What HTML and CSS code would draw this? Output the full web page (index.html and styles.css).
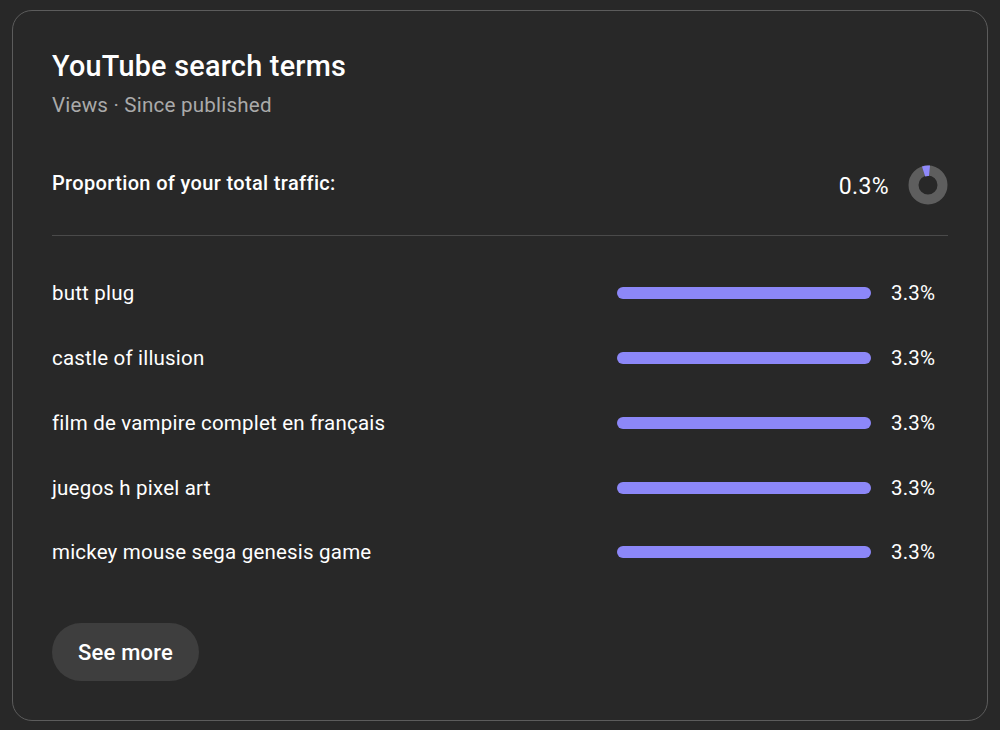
FILE: index.html
```html
<!DOCTYPE html>
<html>
<head>
<meta charset="utf-8">
<link rel="stylesheet" href="styles.css">
</head>
<body>
<div class="card">
  <h1 class="title">YouTube search terms</h1>
  <div class="subtitle">Views · Since published</div>
  <div class="proportion">
    <div class="prop-label">Proportion of your total traffic:</div>
    <div class="prop-value">0.3%</div>
    <svg class="donut" width="40" height="40" viewBox="0 0 40 40">
      <circle cx="20" cy="20" r="14.5" fill="none" stroke="#5e5e5e" stroke-width="10"/>
      <path d="M13.97 1.45 A19.5 19.5 0 0 1 22.04 0.61 L20.94 11.05 A9 9 0 0 0 17.22 11.44 Z" fill="#8f89fb"/>
    </svg>
  </div>
  <div class="divider"></div>
  <div class="rows">
    <div class="row"><div class="term">butt plug</div><div class="bar"></div><div class="pct">3.3%</div></div>
    <div class="row"><div class="term">castle of illusion</div><div class="bar"></div><div class="pct">3.3%</div></div>
    <div class="row"><div class="term">film de vampire complet en français</div><div class="bar"></div><div class="pct">3.3%</div></div>
    <div class="row"><div class="term">juegos h pixel art</div><div class="bar"></div><div class="pct">3.3%</div></div>
    <div class="row"><div class="term">mickey mouse sega genesis game</div><div class="bar"></div><div class="pct">3.3%</div></div>
  </div>
  <button class="more">See more</button>
</div>
</body>
</html>
```

FILE: styles.css
```css
html, body {
  margin: 0;
  padding: 0;
  background: #282828;
}
body {
  font-family: Roboto, "Noto Sans", sans-serif;
  color: #ffffff;
  width: 1000px;
  height: 730px;
  overflow: hidden;
}
.card {
  box-sizing: border-box;
  margin: 10px 0 0 12px;
  width: 976px;
  height: 711px;
  border: 1.5px solid #5c5c5c;
  border-radius: 20px;
  padding: 39px 39px 0 39px;
}
.title {
  margin: 0;
  font-size: 28.8px;
  font-weight: 500;
  line-height: 32px;
  letter-spacing: 0.25px;
}
.subtitle {
  margin-top: 11px;
  font-size: 20.6px;
  line-height: 24px;
  color: #aaaaaa;
  letter-spacing: 0.2px;
}
.proportion {
  display: flex;
  align-items: center;
  margin-top: 48px;
  height: 40px;
}
.prop-label {
  flex: 1;
  font-size: 20px;
  font-weight: 500;
  letter-spacing: 0.35px;
  position: relative;
  top: -2px;
}
.prop-value {
  font-size: 23px;
  margin-right: 19px;
  letter-spacing: 0.4px;
  position: relative;
  top: 1px;
}
.donut {
  display: block;
}
.divider {
  margin-top: 30px;
  height: 1px;
  background: #4a4a4a;
}
.rows {
  margin-top: 25px;
}
.row {
  display: flex;
  align-items: center;
  height: 64.75px;
}
.term {
  flex: 1;
  font-size: 20.5px;
  letter-spacing: 0.2px;
}
.bar {
  width: 254px;
  height: 12px;
  border-radius: 6px;
  background: #8c87f8;
  margin-right: 20px;
}
.pct {
  width: 57px;
  font-size: 20.5px;
  letter-spacing: 0.2px;
}
.more {
  margin-top: 38.5px;
  height: 58px;
  padding: 0 26px;
  border: none;
  border-radius: 29px;
  background: #3e3e3e;
  color: #ffffff;
  font-family: Roboto, "Noto Sans", sans-serif;
  font-size: 22px;
  font-weight: 500;
  letter-spacing: 0.2px;
}
```
